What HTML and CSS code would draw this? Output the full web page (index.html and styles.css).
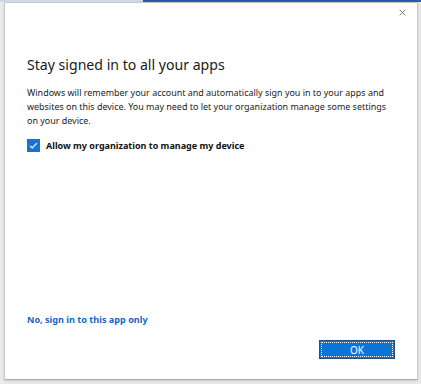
FILE: index.html
```html
<!DOCTYPE html>
<html lang="en">
<head>
    <meta charset="UTF-8">
    <meta name="viewport" content="width=device-width, initial-scale=1.0">
    <title>Stay signed in</title>
    <link rel="stylesheet" href="styles.css">
</head>
<body>
    <div class="topbar">
        <div class="topbar-left"></div>
        <div class="topbar-right"></div>
    </div>

    <div class="dialog">
        <div class="dialog-head">
            <span class="close">
                <svg viewBox="0 0 10 10" fill="none" stroke="#555" stroke-width="1.1">
                    <path d="M1 1L9 9M9 1L1 9"/>
                </svg>
            </span>
        </div>

        <div class="dialog-body">
            <h1 class="title">Stay signed in to all your apps</h1>
            <p class="text">Windows will remember your account and automatically sign you in to your apps and websites on this device. You may need to let your organization manage some settings on your device.</p>

            <label class="check">
                <span class="box">
                    <svg viewBox="0 0 13 13" fill="none" stroke="#fff" stroke-width="1.2">
                        <path d="M3 6.8l2.2 2.2L10 4.2"/>
                    </svg>
                </span>
                <span class="check-label">Allow my organization to manage my device</span>
            </label>
        </div>

        <div class="dialog-foot">
            <a class="link" href="#">No, sign in to this app only</a>
            <div class="actions">
                <button class="ok">OK</button>
            </div>
        </div>
    </div>
</body>
</html>
```

FILE: styles.css
```css
* {
    margin: 0;
    padding: 0;
    box-sizing: border-box;
}

body {
    font-family: "Noto Sans", "Open Sans", sans-serif;
    background-color: #ebebeb;
    width: 421px;
    height: 384px;
    overflow: hidden;
}

/* Window strip behind the dialog */
.topbar {
    display: flex;
    height: 2px;
}

.topbar-left {
    width: 143px;
    background: #cfd8e2;
}

.topbar-right {
    flex: 1;
    background: #1b5fa9;
}

/* Dialog */
.dialog {
    margin-left: 4px;
    width: 414px;
    height: 378px;
    background: #fff;
    border: 1px solid #c9c9c9;
    border-bottom-color: #a9a9a9;
    box-shadow: 0 1px 3px rgba(0,0,0,0.15);
    display: flex;
    flex-direction: column;
}

.dialog-head {
    display: flex;
    justify-content: flex-end;
    padding: 6px 11px 0 0;
    height: 50px;
}

.close {
    width: 7px;
    height: 7px;
    display: block;
}

.close svg {
    display: block;
    width: 7px;
    height: 7px;
}

.dialog-body {
    padding: 0 22px;
    flex: 1;
}

.title {
    font-weight: 400;
    font-size: 14.1px;
    line-height: 24px;
    color: #1a1a1a;
    margin-bottom: 9px;
}

.text {
    font-size: 8.95px;
    line-height: 14px;
    color: #1b1b1b;
    margin-bottom: 11px;
}

.check {
    display: flex;
    align-items: center;
    gap: 6px;
}

.box {
    width: 13px;
    height: 13px;
    background: #1a73d3;
    display: block;
}

.box svg {
    display: block;
    width: 13px;
    height: 13px;
}

.check-label {
    font-size: 9px;
    font-weight: 700;
    color: #111;
}

.dialog-foot {
    padding: 0 22px 20px;
}

.link {
    display: block;
    font-size: 9.1px;
    line-height: 14px;
    font-weight: 700;
    color: #1565c0;
    text-decoration: none;
    margin-bottom: 13px;
}

.actions {
    display: flex;
    justify-content: flex-end;
}

.ok {
    width: 76px;
    height: 19px;
    background: #0a74d8;
    border: 1px solid #1f4f8a;
    outline: 1px dotted #fff;
    outline-offset: -3px;
    color: #fff;
    font-family: "Noto Sans", sans-serif;
    font-size: 10px;
}
```
